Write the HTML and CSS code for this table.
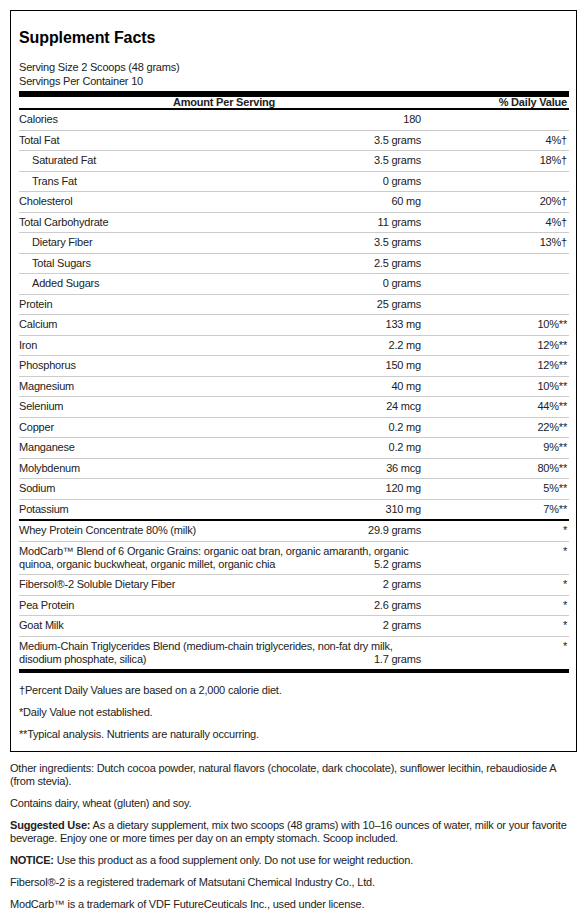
FILE: index.html
```html
<!DOCTYPE html>
<html lang="en">
<head>
    <meta charset="UTF-8">
    <meta name="viewport" content="width=device-width, initial-scale=1.0">
    <title>Supplement Facts</title>
    <link rel="stylesheet" href="styles.css">
</head>
<body>
    <div class="facts">
        <h1>Supplement Facts</h1>
        <div class="serving">
            <p>Serving Size 2 Scoops (48 grams)</p>
            <p>Servings Per Container 10</p>
        </div>
        <div class="bar"></div>

        <div class="head">
            <div class="head-amount">Amount Per Serving</div>
            <div class="dv">% Daily Value</div>
        </div>

        <!-- Nutrients -->
        <div class="row"><div class="name">Calories<span class="amt">180</span></div><div class="dv"></div></div>
        <div class="row"><div class="name">Total Fat<span class="amt">3.5 grams</span></div><div class="dv">4%†</div></div>
        <div class="row"><div class="name sub">Saturated Fat<span class="amt">3.5 grams</span></div><div class="dv">18%†</div></div>
        <div class="row"><div class="name sub">Trans Fat<span class="amt">0 grams</span></div><div class="dv"></div></div>
        <div class="row"><div class="name">Cholesterol<span class="amt">60 mg</span></div><div class="dv">20%†</div></div>
        <div class="row"><div class="name">Total Carbohydrate<span class="amt">11 grams</span></div><div class="dv">4%†</div></div>
        <div class="row"><div class="name sub">Dietary Fiber<span class="amt">3.5 grams</span></div><div class="dv">13%†</div></div>
        <div class="row"><div class="name sub">Total Sugars<span class="amt">2.5 grams</span></div><div class="dv"></div></div>
        <div class="row"><div class="name sub">Added Sugars<span class="amt">0 grams</span></div><div class="dv"></div></div>
        <div class="row"><div class="name">Protein<span class="amt">25 grams</span></div><div class="dv"></div></div>
        <div class="row"><div class="name">Calcium<span class="amt">133 mg</span></div><div class="dv">10%**</div></div>
        <div class="row"><div class="name">Iron<span class="amt">2.2 mg</span></div><div class="dv">12%**</div></div>
        <div class="row"><div class="name">Phosphorus<span class="amt">150 mg</span></div><div class="dv">12%**</div></div>
        <div class="row"><div class="name">Magnesium<span class="amt">40 mg</span></div><div class="dv">10%**</div></div>
        <div class="row"><div class="name">Selenium<span class="amt">24 mcg</span></div><div class="dv">44%**</div></div>
        <div class="row"><div class="name">Copper<span class="amt">0.2 mg</span></div><div class="dv">22%**</div></div>
        <div class="row"><div class="name">Manganese<span class="amt">0.2 mg</span></div><div class="dv">9%**</div></div>
        <div class="row"><div class="name">Molybdenum<span class="amt">36 mcg</span></div><div class="dv">80%**</div></div>
        <div class="row"><div class="name">Sodium<span class="amt">120 mg</span></div><div class="dv">5%**</div></div>
        <div class="row row-sep"><div class="name">Potassium<span class="amt">310 mg</span></div><div class="dv">7%**</div></div>

        <!-- Other ingredients with amounts -->
        <div class="row"><div class="name">Whey Protein Concentrate 80% (milk)<span class="amt">29.9 grams</span></div><div class="dv">*</div></div>
        <div class="row"><div class="name">ModCarb™ Blend of 6 Organic Grains: organic oat bran, organic amaranth, organic quinoa, organic buckwheat, organic millet, organic chia<span class="amt">5.2 grams</span></div><div class="dv">*</div></div>
        <div class="row"><div class="name">Fibersol®-2 Soluble Dietary Fiber<span class="amt">2 grams</span></div><div class="dv">*</div></div>
        <div class="row"><div class="name">Pea Protein<span class="amt">2.6 grams</span></div><div class="dv">*</div></div>
        <div class="row"><div class="name">Goat Milk<span class="amt">2 grams</span></div><div class="dv">*</div></div>
        <div class="row row-end"><div class="name">Medium-Chain Triglycerides Blend (medium-chain triglycerides, non-fat dry milk, disodium phosphate, silica)<span class="amt">1.7 grams</span></div><div class="dv">*</div></div>

        <div class="notes">
            <p>†Percent Daily Values are based on a 2,000 calorie diet.</p>
            <p>*Daily Value not established.</p>
            <p>**Typical analysis. Nutrients are naturally occurring.</p>
        </div>
    </div>

    <div class="extra">
        <p>Other ingredients: Dutch cocoa powder, natural flavors (chocolate, dark chocolate), sunflower lecithin, rebaudioside A (from stevia).</p>
        <p>Contains dairy, wheat (gluten) and soy.</p>
        <p><b>Suggested Use:</b> As a dietary supplement, mix two scoops (48 grams) with 10–16 ounces of water, milk or your favorite beverage. Enjoy one or more times per day on an empty stomach. Scoop included.</p>
        <p><b>NOTICE:</b> Use this product as a food supplement only. Do not use for weight reduction.</p>
        <p>Fibersol®-2 is a registered trademark of Matsutani Chemical Industry Co., Ltd.</p>
        <p>ModCarb™ is a trademark of VDF FutureCeuticals Inc., used under license.</p>
    </div>
</body>
</html>
```

FILE: styles.css
```css
/* Base */
body {
    margin: 10px;
    font-family: "Liberation Sans", Arial, sans-serif;
    font-size: 11px;
    line-height: 13px;
    letter-spacing: -0.2px;
    color: #222;
    background: #fff;
}

/* Facts box */
.facts {
    border: 1px solid #000;
    padding: 0 7px 10px 8px;
}

.facts h1 {
    font-size: 16px;
    line-height: 18px;
    letter-spacing: -0.1px;
    color: #000;
    margin: 18px 0 13px;
}

.serving p {
    margin: 0;
    line-height: 14px;
}

.bar {
    height: 6px;
    background: #000;
    margin-top: 3px;
}

/* Table header */
.head {
    display: grid;
    grid-template-columns: 402px 1fr;
    font-weight: bold;
    line-height: 11px;
    border-bottom: 2px solid #000;
}

.head-amount {
    text-align: center;
    padding-left: 8px;
}

/* Rows */
.row {
    display: grid;
    grid-template-columns: 402px 1fr;
    padding: 3.25px 0;
    border-bottom: 1px solid #ccc;
}

.row-sep {
    border-bottom: 2px solid #000;
}

.row-end {
    border-bottom: 4px solid #000;
}

.name.sub {
    padding-left: 13px;
}

.amt {
    float: right;
}

.dv {
    text-align: right;
    padding-right: 2px;
}

/* Footnotes */
.notes p {
    margin: 9px 0 0;
}

.notes p:first-child {
    margin-top: 11px;
}

/* Text below the box */
.extra p {
    margin: 9px 0 0;
}

.extra p:first-child {
    margin-top: 10px;
}
```
